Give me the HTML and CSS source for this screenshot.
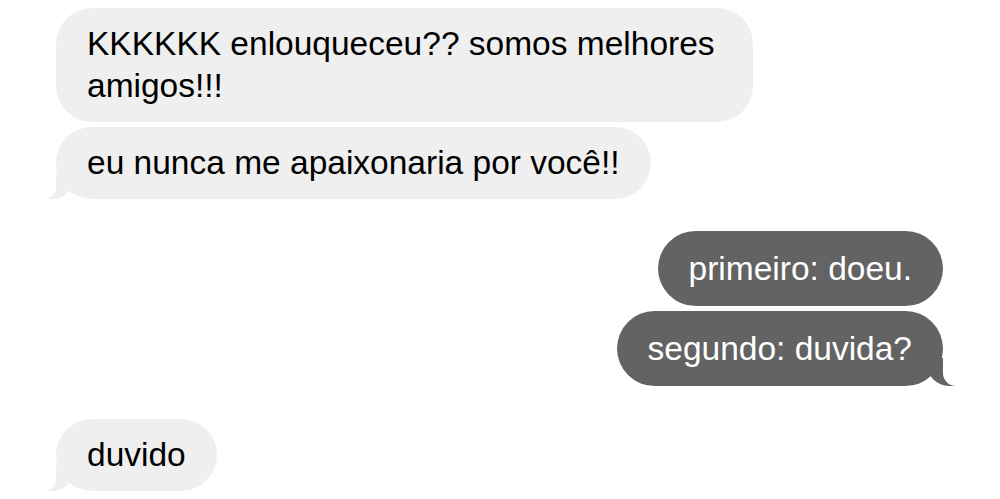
FILE: index.html
```html
<!DOCTYPE html>
<html lang="pt">
<head>
<meta charset="utf-8">
<link rel="stylesheet" href="styles.css">
</head>
<body>
<div class="chat">
  <div class="msg in">KKKKKK enlouqueceu?? somos melhores amigos!!!</div>
  <div class="msg in tail">eu nunca me apaixonaria por você!!</div>
  <div class="msg out group-start">primeiro: doeu.</div>
  <div class="msg out tail">segundo: duvida?</div>
  <div class="msg in tail group-start">duvido</div>
</div>
</body>
</html>
```
FILE: styles.css
```css
html, body {
  margin: 0;
  padding: 0;
  background: #ffffff;
}
.chat {
  display: flex;
  flex-direction: column;
  gap: 5px;
  padding: 8px 57px 0 56px;
  font-family: "Liberation Sans", Arial, sans-serif;
  font-size: 33.5px;
  line-height: 42px;
}
.msg {
  position: relative;
  max-width: 635px;
  padding: 15px 31px;
  border-radius: 36px;
  width: fit-content;
}
.msg.in {
  align-self: flex-start;
  background: #efefef;
  color: #000000;
}
.msg.out {
  align-self: flex-end;
  background: #636363;
  color: #ffffff;
  padding: 17px 31px 16px;
  border-radius: 38px;
}
.msg.group-start {
  margin-top: 27px;
}
.msg.in.group-start {
  margin-top: 28px;
}
.msg.in.tail::before {
  content: "";
  position: absolute;
  bottom: 0;
  left: -9px;
  width: 26px;
  height: 26px;
  background: #efefef;
  border-bottom-right-radius: 20px;
}
.msg.in.tail::after {
  content: "";
  position: absolute;
  bottom: 0;
  left: -14px;
  width: 14px;
  height: 28px;
  background: #ffffff;
  border-bottom-right-radius: 12px;
}
.msg.out.tail::before {
  content: "";
  position: absolute;
  bottom: 0;
  right: -12px;
  width: 28px;
  height: 28px;
  background: #636363;
  border-bottom-left-radius: 22px;
}
.msg.out.tail::after {
  content: "";
  position: absolute;
  bottom: 0;
  right: -17px;
  width: 17px;
  height: 30px;
  background: #ffffff;
  border-bottom-left-radius: 13px;
}
```
